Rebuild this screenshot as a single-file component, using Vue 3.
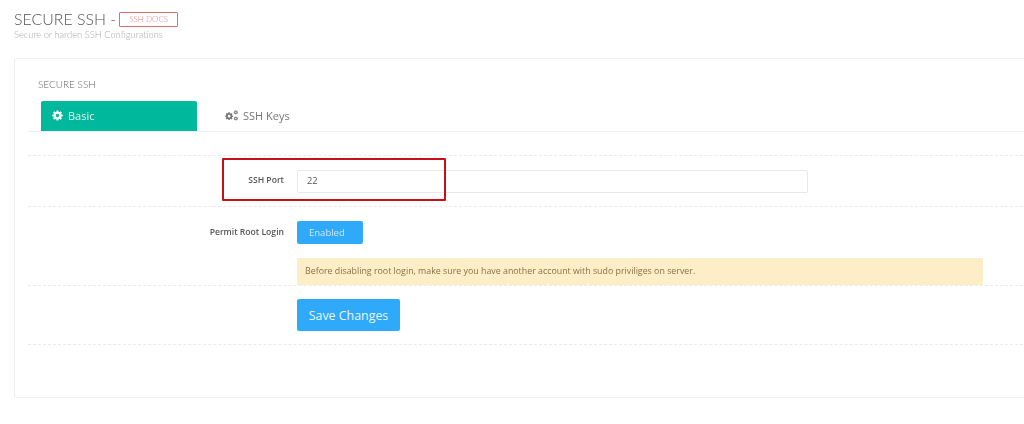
<script setup>
const gear = 'M10 1h4l.6 3.2 1.9.8 2.7-1.9 2.8 2.8-1.900 2.700.8 1.900L24 11v3l-3.100.6-.8 1.900 1.900 2.700-2.800 2.800-2.700-1.900-1.900.8L14 24h-4l-.6-3.100-1.900-.8-2.700 1.900L2 19.200l1.900-2.700-.8-1.900L0 14v-3l3.100-.6.8-1.900L2 5.900l2.800-2.800 2.700 1.900 1.900-.8L10 1zm2 7.500a4 4 0 1 0 0 8 4 4 0 0 0 0-8z'
</script>

<template>
  <div class="page">
    <header class="head">
      <div class="title-line">
        <h1 class="title">SECURE SSH -</h1>
        <a class="docs">SSH DOCS</a>
      </div>
      <p class="subtitle">Secure or harden SSH Configurations</p>
    </header>

    <section class="card">
      <div class="card-title">SECURE SSH</div>
      <nav class="tabs">
        <div class="tab active">
          <svg class="ico" viewBox="0 0 24 25" width="11" height="11">
            <path fill="#fff" fill-rule="evenodd" :d="gear" />
          </svg>
          <span>Basic</span>
        </div>
        <div class="tab">
          <svg class="ico" viewBox="0 0 36 30" width="13" height="11">
            <g fill="#777" fill-rule="evenodd">
              <path :d="gear" transform="translate(0 5) scale(0.95)" />
              <path :d="gear" transform="translate(24 0) scale(0.5)" />
              <path :d="gear" transform="translate(24 17) scale(0.5)" />
            </g>
          </svg>
          <span>SSH Keys</span>
        </div>
      </nav>

      <form class="form" @submit.prevent>
        <div class="row row-port">
          <label class="label">SSH Port</label>
          <div class="value">
            <input class="input" value="22" />
          </div>
          <div class="highlight"></div>
        </div>
        <div class="row row-root">
          <label class="label">Permit Root Login</label>
          <div class="value">
            <div class="toggle">Enabled</div>
            <div class="alert">Before disabling root login, make sure you have another account with sudo priviliges on server.</div>
          </div>
        </div>
        <div class="row row-save">
          <div class="label"></div>
          <div class="value">
            <button class="save" type="button">Save Changes</button>
          </div>
        </div>
      </form>
    </section>
  </div>
</template>

<style>
html, body { margin: 0; background: #fff; overflow: hidden; }
</style>

<style scoped>
.page {
  width: 1024px;
  height: 424px;
  overflow: hidden;
  box-sizing: border-box;
  padding: 9px 0 0 14px;
  font-family: "Open Sans", "Liberation Sans", sans-serif;
  color: #555;
  filter: blur(0.35px);
}
.head { height: 49px; }
.title-line { display: flex; align-items: center; height: 20px; }
.title {
  margin: 0;
  font-family: Lato, "Open Sans", sans-serif;
  font-weight: 300;
  font-size: 15.900px;
  line-height: 20px;
  color: #555;
}
.docs {
  margin-left: 3px;
  box-sizing: border-box;
  width: 59px;
  height: 15px;
  border: 1px solid #d9706f;
  border-radius: 1px;
  font-family: Lato, "Open Sans", sans-serif;
  font-size: 8px;
  font-weight: 300;
  line-height: 13px;
  text-align: center;
  color: #e27d7b;
}
.subtitle {
  margin: -1px 0 0;
  font-family: Lato, "Open Sans", sans-serif;
  font-weight: 300;
  font-size: 9.300px;
  line-height: 13px;
  color: #aaa;
}
.card {
  box-sizing: border-box;
  width: 1040px;
  height: 340px;
  border: 1px solid #eceeef;
  border-radius: 3px;
  padding: 17px 0 0 13px;
}
.card-title {
  margin-left: 10px;
  font-family: Lato, "Open Sans", sans-serif;
  font-weight: 300;
  font-size: 10px;
  line-height: 16px;
  color: #666;
  height: 25px;
}
.tabs {
  display: flex;
  padding-left: 13px;
  border-bottom: 1px solid #f0f0f0;
  height: 30px;
}
.tab {
  width: 156px;
  height: 30px;
  box-sizing: border-box;
  padding: 0 0 2px 11px;
  display: flex;
  align-items: center;
  gap: 4px;
  font-size: 11px;
  color: #777;
  border-radius: 2px 2px 0 0;
}
.tab.active { background: #00b89c; color: #dff6f1; }
.tab:not(.active) { padding-left: 28px; }
.ico { flex: none; margin-right: 1px; }
.form { margin-top: 23px; border-top: 1px dashed #eaeaea; }
.row {
  display: flex;
  position: relative;
  border-bottom: 1px dashed #eaeaea;
  box-sizing: border-box;
}
.label {
  width: 256px;
  flex: none;
  text-align: right;
  font-size: 8.600px;
  font-weight: 600;
  color: #555;
}
.value { margin-left: 13px; flex: none; width: 686px; }
.row-port { height: 51px; padding-top: 14px; }
.row-port .label { line-height: 20px; }
.input {
  display: block;
  box-sizing: border-box;
  width: 511px;
  height: 23px;
  border: 1px solid #e8e8e8;
  border-radius: 2px;
  padding: 0 9px 2px;
  font: 9.300px "Open Sans", sans-serif;
  color: #555;
  outline: none;
  background: #fff;
}
.highlight {
  position: absolute;
  left: 194px;
  top: 2px;
  width: 224px;
  height: 43px;
  box-sizing: border-box;
  border: 2px solid #c8101a;
  border-radius: 1px;
  pointer-events: none;
}
.row-root { height: 79px; padding-top: 14px; }
.row-root .label { line-height: 22px; }
.toggle {
  box-sizing: border-box;
  width: 66px;
  height: 23px;
  background: #2fa9f9;
  border-radius: 2px;
  padding-left: 12px;
  font-size: 9.500px;
  line-height: 23px;
  color: #cfeafd;
}
.alert {
  margin-top: 14px;
  height: 27px;
  background: #feeec8;
  padding-left: 8px;
  font-size: 8.840px;
  line-height: 26px;
  color: #8a7045;
}
.row-save { height: 59px; padding-top: 13px; }
.save {
  display: block;
  width: 103px;
  height: 32px;
  padding: 0;
  border: none;
  background: #2fa9f9;
  border-radius: 2px;
  font: 12.400px "Open Sans", sans-serif;
  color: #eaf6fe;
}
</style>
